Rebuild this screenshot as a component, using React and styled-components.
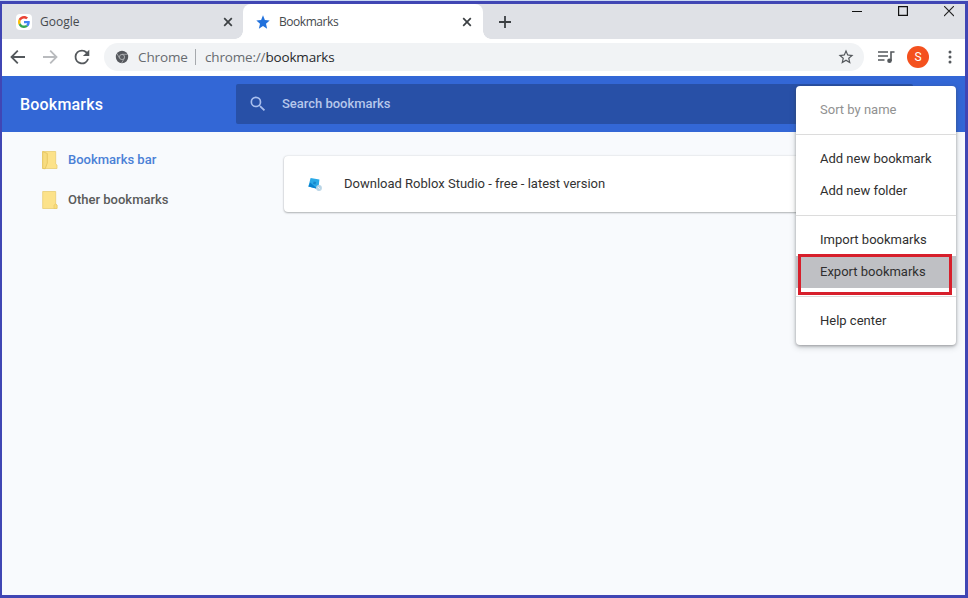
import styled, { createGlobalStyle, css } from "styled-components";

const GlobalStyle = createGlobalStyle`
  * {
    box-sizing: border-box;
  }
  body {
    margin: 0;
    background: #c9d8f4;
    font-family: Roboto, "Liberation Sans", sans-serif;
  }
`;

const Window = styled.div`
  position: relative;
  width: 968px;
  height: 597px;
  margin-top: 1px;
  border: 3px solid #4046b4;
  border-left-width: 2px;
  background: #f8fafd;
  display: flex;
  flex-direction: column;
  overflow: hidden;
`;

const TabStrip = styled.div`
  flex: none;
  display: flex;
  height: 35px;
  background: #dfe1e6;
`;

const Tab = styled.div`
  position: relative;
  display: flex;
  align-items: center;
  width: ${(p) => p.$width};
  height: 35px;
  padding: 1px 9px 0 ${(p) => p.$left};
  font-family: "Open Sans", "Noto Sans", sans-serif;
  font-size: 12px;
  letter-spacing: ${(p) => p.$spacing};
  color: #45494d;

  ${(p) =>
    p.$active &&
    css`
      padding-right: 10px;
      background: #fff;
      border-radius: 8px 8px 0 0;

      &::before,
      &::after {
        content: "";
        position: absolute;
        bottom: 0;
        width: 8px;
        height: 8px;
      }
      &::before {
        left: -8px;
        background: radial-gradient(circle at 0 0, transparent 7.5px, #fff 8px);
      }
      &::after {
        right: -8px;
        background: radial-gradient(circle at 100% 0, transparent 7.5px, #fff 8px);
      }
    `}
`;

const TabTitle = styled.span`
  flex: 1;
  margin-left: 8px;
  padding-bottom: 1px;
`;

const NewTab = styled.div`
  display: flex;
  align-items: center;
  margin-left: 15px;
  padding-top: 1px;
`;

const WindowButtons = styled.div`
  display: flex;
  gap: 36px;
  margin-left: auto;
  padding: 2px 11px 0 0;
`;

const Favicon = styled.div`
  display: flex;
  align-items: center;
  justify-content: center;
  width: 16px;
  height: 16px;
  border-radius: 4px;
  background: #fff;
`;

const Toolbar = styled.div`
  flex: none;
  display: flex;
  align-items: center;
  height: 37px;
  padding: 0 9px 1px 4px;
  background: #fff;

  svg {
    flex: none;
  }
`;

const NavButtons = styled.div`
  display: flex;
  align-items: center;
  gap: 8px;
`;

const AddressBar = styled.div`
  display: flex;
  align-items: center;
  flex: none;
  width: 760px;
  height: 28px;
  margin-left: 11px;
  padding: 0 9px 0 10px;
  border-radius: 14px;
  background: #f1f3f5;
  font-family: "Open Sans", "Noto Sans", sans-serif;
  font-size: 13.5px;
  color: #676b70;
`;

const SiteName = styled.span`
  width: 57px;
  margin-left: 8px;
  letter-spacing: -0.12px;
`;

const Url = styled.span`
  flex: 1;
  padding-left: 9px;
  border-left: 1px solid #a6a9ad;
  line-height: 16px;
  letter-spacing: -0.17px;

  b {
    font-weight: 400;
    color: #27292c;
  }
`;

const ToolbarActions = styled.div`
  display: flex;
  align-items: center;
  margin-left: 14px;
`;

const Avatar = styled.div`
  width: 22px;
  height: 22px;
  margin: 0 19px 0 12px;
  border-radius: 50%;
  background: #f4511e;
  color: #fff;
  font-size: 12px;
  line-height: 22px;
  text-align: center;
`;

const Header = styled.header`
  flex: none;
  display: flex;
  align-items: center;
  height: 56px;
  background: #3367d6;
`;

const HeaderTitle = styled.h1`
  width: 234px;
  margin: 0;
  padding-left: 18px;
  font-size: 16px;
  font-weight: 500;
  letter-spacing: 0.2px;
  color: #fff;
`;

const Search = styled.div`
  display: flex;
  align-items: center;
  width: 677px;
  height: 40px;
  padding: 0 12px;
  border-radius: 2px;
  background: #2850a7;
  font-size: 13px;
  font-weight: 500;
  letter-spacing: -0.02px;
  color: #b6c7eb;

  svg {
    margin-right: 14px;
  }
`;

const SearchPlaceholder = styled.span`
  padding-bottom: 2px;
`;

const Content = styled.main`
  display: flex;
  flex: 1;
`;

const Sidebar = styled.nav`
  width: 282px;
  padding-top: 8px;
`;

const Folder = styled.div`
  display: flex;
  align-items: center;
  gap: 10px;
  height: 40px;
  padding-left: 39px;
  font-size: 13px;
  font-weight: 500;
  color: ${(p) => (p.$selected ? "#4a80d6" : "#5a5a5a")};

  span {
    padding-bottom: 2px;
  }
`;

const BookmarkCard = styled.div`
  display: flex;
  align-items: center;
  gap: 21px;
  width: 656px;
  height: 56px;
  margin-top: 24px;
  padding-left: 23px;
  border-radius: 4px;
  background: #fff;
  box-shadow: 0 1px 2px rgba(60, 64, 67, 0.35), 0 0 2px rgba(60, 64, 67, 0.2);
  font-size: 13px;
  color: #333;

  span {
    padding-bottom: 1px;
  }
`;

const Menu = styled.div`
  position: absolute;
  top: 82px;
  left: 794px;
  width: 160px;
  padding: 8px 0;
  border-radius: 4px;
  background: #fff;
  box-shadow: 0 1px 3px rgba(60, 64, 67, 0.4), 0 2px 6px rgba(60, 64, 67, 0.25);
`;

const MenuItem = styled.div`
  height: 32px;
  padding-left: 24px;
  background: ${(p) => (p.$hovered ? "#bfc0c4" : "transparent")};
  font-size: 13px;
  line-height: 31px;
  color: ${(p) => (p.$disabled ? "#919191" : "#2f2f2f")};
`;

const Divider = styled.div`
  height: 1px;
  margin: 8px 0;
  background: #dcdcdc;
`;

const Highlight = styled.div`
  position: absolute;
  top: 168px;
  left: 2px;
  width: 154px;
  height: 41px;
  border: 3px solid #d71f2b;
`;

const GoogleLogo = () => (
  <svg width="12" height="12" viewBox="0 0 48 48">
    <path fill="#EA4335" d="M24 9.500c3.540 0 6.710 1.220 9.210 3.600l6.850-6.850C35.900 2.380 30.470 0 24 0 14.620 0 6.510 5.380 2.560 13.220l7.980 6.190C12.430 13.720 17.740 9.500 24 9.500z" />
    <path fill="#4285F4" d="M46.980 24.550c0-1.570-.15-3.090-.38-4.550H24v9.020h12.940c-.58 2.960-2.260 5.480-4.780 7.180l7.730 6c4.510-4.180 7.090-10.360 7.090-17.650z" />
    <path fill="#FBBC05" d="M10.530 28.590c-.48-1.450-.76-2.990-.76-4.590s.27-3.140.76-4.590l-7.980-6.190C.92 16.460 0 20.120 0 24c0 3.880.92 7.540 2.560 10.780l7.970-6.190z" />
    <path fill="#34A853" d="M24 48c6.480 0 11.930-2.130 15.890-5.810l-7.730-6c-2.150 1.450-4.920 2.300-8.160 2.300-6.260 0-11.570-4.220-13.470-9.910l-7.980 6.190C6.510 42.620 14.620 48 24 48z" />
  </svg>
);

const StarIcon = () => (
  <svg width="16" height="16" viewBox="0 0 24 24" fill="#2171dc">
    <path d="M12 18 18.200 22 16.500 14.600 22 9.600 14.800 9 12 2 9.200 9 2 9.600 7.500 14.600 5.800 22z" />
  </svg>
);

const CloseIcon = () => (
  <svg width="12" height="12" viewBox="0 0 12 12" stroke="#3c4043" strokeWidth="1.700">
    <path d="M2.200 2.200 9.800 9.800M9.800 2.200 2.200 9.800" />
  </svg>
);

const ArrowIcon = ({ forward }) => (
  <svg width="24" height="24" viewBox="0 0 24 24" fill="none" stroke={forward ? "#b9bbbe" : "#54585c"} strokeWidth="1.800">
    {forward ? <path d="M5 12h13M12.200 5.700 18.500 12l-6.300 6.300" /> : <path d="M19 12H6M11.800 5.700 5.500 12l6.300 6.300" />}
  </svg>
);

const ReloadIcon = () => (
  <svg width="23" height="22" viewBox="-1 0 25 24" fill="#54585c">
    <path d="M17.650 6.350A7.960 7.960 0 0 0 12 4a8 8 0 1 0 7.730 10h-2.080A6 6 0 1 1 12 6c1.660 0 3.140.69 4.220 1.780L13 11h7V4l-2.350 2.350z" />
  </svg>
);

const ChromeIcon = () => (
  <svg width="16" height="16" viewBox="0 0 16 16">
    <circle cx="8" cy="8" r="6.200" fill="#55585d" />
    <path d="M8 5.300h5.600M5.700 9.400 2.900 4.500M10.300 9.400 7.500 14.200" stroke="#d0d2d5" strokeWidth=".6" />
    <circle cx="8" cy="8" r="2.600" fill="#5c5f64" stroke="#c9cbcd" strokeWidth=".7" />
  </svg>
);

const StarOutlineIcon = () => (
  <svg width="18" height="18" viewBox="0 0 24 24" fill="#54585c">
    <path d="m22 9.240-7.190-.62L12 2 9.190 8.630 2 9.240l5.460 4.730L5.820 21 12 17.270 18.180 21l-1.630-7.030L22 9.240zM12 15.400l-3.760 2.270 1-4.280-3.320-2.880 4.380-.38L12 6.100l1.710 4.040 4.380.38-3.320 2.880 1 4.280L12 15.400z" />
  </svg>
);

const QueueIcon = () => (
  <svg width="17" height="14" viewBox="0 0 17 14">
    <path d="M0 2h10M0 6h10M0 10h6.500M13 11V2h3.500" fill="none" stroke="#54585c" strokeWidth="1.600" />
    <circle cx="11.500" cy="10.800" r="2.300" fill="#54585c" />
  </svg>
);

const DotsIcon = () => (
  <svg width="4" height="14" viewBox="0 0 4 14" fill="#54585c">
    <circle cx="2" cy="2" r="1.500" />
    <circle cx="2" cy="7" r="1.500" />
    <circle cx="2" cy="12" r="1.500" />
  </svg>
);

const SearchIcon = () => (
  <svg width="20" height="20" viewBox="0 0 24 24" fill="#a9bfee">
    <path d="M15.500 14h-.79l-.28-.27A6.470 6.470 0 0 0 16 9.500 6.500 6.500 0 1 0 9.500 16c1.610 0 3.090-.59 4.230-1.570l.27.28v.79l5 4.990L20.490 19l-4.990-5zm-6 0a4.500 4.500 0 1 1 0-9 4.500 4.500 0 0 1 0 9z" />
  </svg>
);

const FolderIcon = ({ open }) => (
  <svg width="17" height="20" viewBox="0 0 17 20">
    <path d="M1.700 1.500h13v12.500l1.300 1v3.500H1.700z" fill="#fce28a" stroke="#e9cd72" strokeWidth=".8" />
    {open ? (
      <path d="M1.700 1.500 6.300 3.500v9.500L4.200 18.800l-2.500-.3z" fill="#f7dc80" stroke="#e2c15c" strokeWidth=".8" />
    ) : (
      <path d="M13 18.500V15l1.700-1 1.300 1v3.500z" fill="#f9dc7c" stroke="#e6c765" strokeWidth=".6" />
    )}
  </svg>
);

const RobloxStudioIcon = () => (
  <svg width="16" height="16" viewBox="0 0 16 16">
    <path d="M3.600 2 12.400 3.400l-1 9.600-10-2.400z" fill="#2aa9e6" />
    <path d="M1.400 10.600 3.200 6.500l6.300 5.500-.6.400z" fill="#0881cf" />
    <path d="m6.700 5.500 2.400.6-.6 2.400-2.500-.6z" fill="#1787cb" />
    <circle cx="12" cy="12" r="2.900" fill="#b9d5e6" />
    <path d="m11 11 2 2.200" stroke="#e7f1f7" strokeWidth="1" />
  </svg>
);

const App = () => {
  return (
    <>
      <GlobalStyle />
      <Window>
        <TabStrip>
          <Tab $width="241px" $left="14px">
            <Favicon>
              <GoogleLogo />
            </Favicon>
            <TabTitle>Google</TabTitle>
            <CloseIcon />
          </Tab>
          <Tab $active $width="240px" $left="12px" $spacing="-0.45px">
            <StarIcon />
            <TabTitle>Bookmarks</TabTitle>
            <CloseIcon />
          </Tab>
          <NewTab>
            <svg width="14" height="14" viewBox="0 0 14 14" stroke="#3c4043" strokeWidth="1.800">
              <path d="M1 7h12M7 1v12" />
            </svg>
          </NewTab>
          <WindowButtons>
            <svg width="10" height="11" viewBox="0 0 10 11" stroke="#111">
              <path d="M0 5.500h10" />
            </svg>
            <svg width="10" height="11" viewBox="0 0 10 11" fill="none" stroke="#111" strokeWidth="1.200">
              <path d="M.6.600h8.800v8.800H.6z" />
            </svg>
            <svg width="10" height="11" viewBox="0 0 10 11" stroke="#222" strokeWidth="1.100">
              <path d="m0 0 10 10M10 0 0 10" />
            </svg>
          </WindowButtons>
        </TabStrip>

        <Toolbar>
          <NavButtons>
            <ArrowIcon />
            <ArrowIcon forward />
            <ReloadIcon />
          </NavButtons>
          <AddressBar>
            <ChromeIcon />
            <SiteName>Chrome</SiteName>
            <Url>
              chrome://<b>bookmarks</b>
            </Url>
            <StarOutlineIcon />
          </AddressBar>
          <ToolbarActions>
            <QueueIcon />
            <Avatar>S</Avatar>
            <DotsIcon />
          </ToolbarActions>
        </Toolbar>

        <Header>
          <HeaderTitle>Bookmarks</HeaderTitle>
          <Search>
            <SearchIcon />
            <SearchPlaceholder>Search bookmarks</SearchPlaceholder>
          </Search>
        </Header>

        <Content>
          <Sidebar>
            <Folder $selected>
              <FolderIcon open />
              <span>Bookmarks bar</span>
            </Folder>
            <Folder>
              <FolderIcon />
              <span>Other bookmarks</span>
            </Folder>
          </Sidebar>
          <BookmarkCard>
            <RobloxStudioIcon />
            <span>Download Roblox Studio - free - latest version</span>
          </BookmarkCard>
        </Content>

        <Menu>
          <MenuItem $disabled>Sort by name</MenuItem>
          <Divider />
          <MenuItem>Add new bookmark</MenuItem>
          <MenuItem>Add new folder</MenuItem>
          <Divider />
          <MenuItem>Import bookmarks</MenuItem>
          <MenuItem $hovered>Export bookmarks</MenuItem>
          <Divider />
          <MenuItem>Help center</MenuItem>
          <Highlight />
        </Menu>
      </Window>
    </>
  );
};

export default App;
